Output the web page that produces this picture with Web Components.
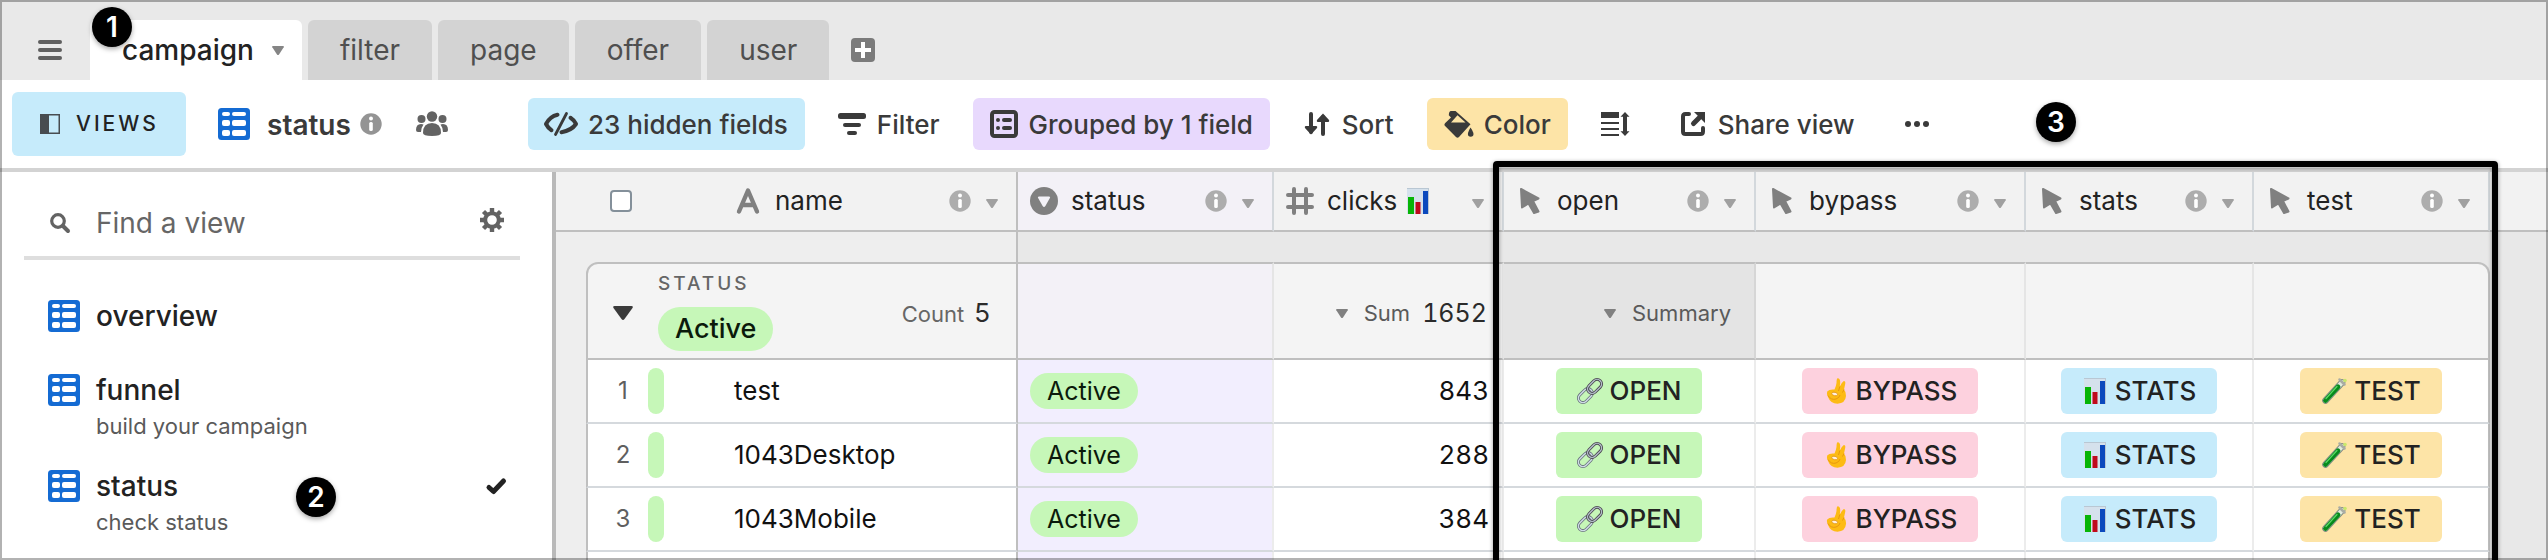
<!DOCTYPE html>
<html lang="en">
<head>
<meta charset="utf-8">
<meta name="viewport" content="width=device-width, initial-scale=1">
<title>campaign: status</title>
<style>
  html, body { margin: 0; height: 100%; }
  body {
    font-family: Inter, "Liberation Sans", sans-serif;
    font-size: 26px;
    color: #222;
    background: #fff;
    --green: #c6f7b8;
    --blue: #c6ebfb;
    --purple: #e8d9fd;
    --yellow: #fde4a7;
    --pink: #fdd1de;
    --line: #bfbfbf;
  }
</style>
</head>
<body>
<base-app></base-app>
<script>
const define = (name, html, setup) => {
  const tpl = document.createElement('template');
  tpl.innerHTML = html;
  customElements.define(name, class extends HTMLElement {
    constructor() {
      super();
      this.attachShadow({ mode: 'open' }).append(tpl.content.cloneNode(true));
    }
    connectedCallback() { if (setup) setup(this, this.shadowRoot); }
  });
};

/* name: [viewBox width, viewBox height, markup] */
const ICONS = {
  menu: [24, 20, '<g fill="currentColor"><rect width="24" height="4" rx="2"/><rect y="8" width="24" height="4" rx="2"/><rect y="16" width="24" height="4" rx="2"/></g>'],
  caret: [12, 9, '<path fill="currentColor" d="M1 0h10q1.4 0 .7 1.300L7 8.400Q6 9.600 5 8.400L.3 1.300Q-.4 0 1 0z"/>'],
  fold: [20, 14, '<path fill="currentColor" d="M1.500 0h17q2 0 1 2l-8 11q-1.500 2-3 0L.5 2Q-.5 0 1.500 0z"/>'],
  plus: [24, 24, '<rect width="24" height="24" rx="4" fill="currentColor"/><path d="M12 4v16M4 12h16" stroke="#fff" stroke-width="4"/>'],
  panel: [20, 20, '<rect x=".75" y=".75" width="18.500" height="18.500" fill="none" stroke="currentColor" stroke-width="1.500"/><path fill="currentColor" d="M0 0h9v20H0z"/>'],
  grid: [32, 32, '<rect width="32" height="32" rx="3.500" fill="#146bd3"/><g fill="#fff"><rect x="4" y="4" width="8" height="4" rx="2"/><rect x="14" y="4" width="14" height="4" rx="2"/><rect x="4" y="12" width="8" height="6" rx="2"/><rect x="14" y="12" width="14" height="6" rx="2"/><rect x="4" y="22" width="8" height="6" rx="2"/><rect x="14" y="22" width="14" height="6" rx="2"/></g>'],
  info: [22, 22, '<circle cx="11" cy="11" r="10.700" fill="currentColor"/><circle cx="11" cy="5.600" r="2" fill="#fff"/><rect x="9.200" y="9" width="3.600" height="9" rx="1.500" fill="#fff"/>'],
  people: [32, 26, '<g fill="currentColor"><circle cx="16" cy="5.500" r="5.200"/><circle cx="5.500" cy="8" r="4"/><circle cx="26.500" cy="8" r="4"/><path d="M7 22q0-10 9-10t9 10q0 3-9 3t-9-3z"/><path d="M0 19q0-6 5-6 1.500 0 2.500.6Q5 17 5 21H2q-2 0-2-2zM32 19q0-6-5-6-1.500 0-2.500.6Q27 17 27 21h3q2 0 2-2z"/></g>'],
  hidden: [32, 24, '<g transform="translate(-1)" fill="none" stroke="currentColor" stroke-linecap="round" stroke-linejoin="round"><path d="M13.500 2.800Q6 4.500 2 12q2 4 5.500 6.200" stroke-width="4"/><path d="M17.500 20.200Q27.500 18.500 32 12q-2-4-5.500-6.200" stroke-width="4"/><path d="M22.500 1.500l-11 21" stroke-width="2.800"/></g>'],
  filter: [28, 24, '<g fill="currentColor"><rect y="1" width="28" height="6" rx="2.500"/><rect x="5" y="11" width="18" height="4" rx="2"/><rect x="9" y="19" width="10" height="4" rx="2"/></g>'],
  group: [28, 28, '<rect x="2" y="2" width="24" height="24" rx="2.500" fill="none" stroke="currentColor" stroke-width="4"/><g fill="currentColor"><circle cx="8" cy="10" r="2"/><circle cx="8" cy="18" r="2"/><rect x="12" y="8" width="10" height="4" rx="2"/><rect x="12" y="16" width="10" height="4" rx="2"/></g>'],
  sort: [28, 24, '<g fill="none" stroke="currentColor" stroke-width="4" stroke-linecap="round"><path d="M8 2v18M20 5v17"/></g><path fill="currentColor" d="M2.500 14h11q1.500 1 .3 2.300L8 22.500 2.200 16.300Q1 15 2.500 14zM14.500 10h11q1.500-1 .3-2.300L20 1.500l-5.800 6.200Q13 9 14.500 10z"/>'],
  color: [29, 28, '<path fill="currentColor" d="M1 13.300L7 7.500 4.800 5.200Q5 1 7 1h4.500l15 13.300L15 27q-1.500 1.300-3 0L.6 15.500Q0 14.500 1 13.300zM7 12.500h14.500L13.500 5.200z" fill-rule="evenodd"/><path fill="currentColor" d="M26.500 17.500q3 4.500 3 6.500a2.800 2.800 0 0 1-5.600 0q0-2 2.600-6.500z"/>'],
  height: [28, 24, '<g fill="currentColor"><path d="M0 0h18v6H0zM0 10h18v2H0zM0 16h18v2H0zM0 22h18v2H0z"/><path d="M24 0l4.500 4.800h-2.500v14.400h2.500L24 24l-4.500-4.800H22V4.800h-2.500z"/></g>'],
  share: [28, 24, '<g fill="none" stroke="currentColor" stroke-width="4" stroke-linecap="round"><path d="M10 2H6.500Q4 2 4 4.500v15Q4 22 6.500 22h15q2.500 0 2.500-2.500V16"/><path d="M14.500 11.500L20 6" stroke-width="5"/></g><path fill="currentColor" d="M15 0h11v11z"/>'],
  dots: [24, 6, '<g fill="currentColor"><circle cx="3" cy="3" r="3"/><circle cx="12" cy="3" r="3"/><circle cx="21" cy="3" r="3"/></g>'],
  search: [20, 20, '<g fill="none" stroke="currentColor"><circle cx="8" cy="8" r="6.300" stroke-width="3.200"/><path d="M13 13l5 5" stroke-width="4" stroke-linecap="round"/></g>'],
  gear: [24, 24, '<g fill="none" stroke="currentColor"><circle cx="12" cy="12" r="6.800" stroke-width="4"/><path d="M12 0v4M12 20v4M0 12h4M20 12h4M3.500 3.500l3 3M17.500 17.500l3 3M3.500 20.500l3-3M17.500 6.500l3-3" stroke-width="4.400"/></g>'],
  check: [20, 16, '<path fill="none" stroke="currentColor" stroke-width="5" stroke-linecap="round" stroke-linejoin="round" d="M3 9.500l4.500 4L17.500 3"/>'],
  text: [28, 28, '<path fill="none" stroke="currentColor" stroke-width="4.400" stroke-linecap="round" stroke-linejoin="round" d="M5 24.500L14 3.500l9 21M8 18h12"/>'],
  select: [28, 28, '<circle cx="14" cy="14" r="14" fill="currentColor"/><path fill="#f3f1f7" d="M9 9.500h10q1.800 0 .9 1.600l-4.500 8q-1.400 2-2.800 0l-4.500-8Q7.200 9.500 9 9.500z"/>'],
  number: [28, 28, '<path fill="none" stroke="currentColor" stroke-width="4" stroke-linecap="round" d="M8 2v24M20 2v24M2 8h24M2 20h24"/>'],
  cursor: [28, 28, '<path fill="currentColor" stroke="currentColor" stroke-width="2" stroke-linejoin="round" d="M5 2l17.500 9.500L17 14l5.500 10.500-4.500 1.500-5.500-9.500L6 20.500z"/>'],
  link: [26, 26, '<g fill="none" transform="rotate(-45 13 13)"><rect x="-1.500" y="8.500" width="16" height="9" rx="4.500" stroke="#68717c" stroke-width="3"/><rect x="-1.500" y="8.500" width="16" height="9" rx="4.500" stroke="#cfdde6" stroke-width="1.400"/><rect x="11.500" y="8.500" width="16" height="9" rx="4.500" stroke="#4a4450" stroke-width="3"/><rect x="11.500" y="8.500" width="16" height="9" rx="4.500" stroke="#b5c2cc" stroke-width="1.300"/></g>'],
  chart: [26, 26, '<path fill="#d5e1ec" d="M2 0h22v26H2z"/><path fill="#b9c7d3" d="M2 0h22v1H2zM23 0h1v26h-1z"/><path fill="#07b507" d="M3 9h6v17H3z"/><path fill="#c00a1c" d="M10.500 14h5v12h-5z"/><path fill="#0b49bd" d="M18 3h5v23h-5z"/>'],
  ok: [26, 26, '<path fill="#fdbb14" d="M14.500.3q3 0 2.700 4.700l-.4 3.500q2-4.500 4-5.500 2 0 1.400 3L21 11.500q2.300 2.500 2 6.500-.6 7.300-8.500 7.700-7 0-9.500-6.700-1.700-3.500-.8-5.500 2-2.500 7.300-2 1.500-3 2-6.500Q13.500 1 14.500.3z"/><ellipse cx="11.700" cy="16" rx="3" ry="1.700" transform="rotate(14 11.700 16)" fill="#fff0e2" stroke="#e0930f" stroke-width=".8"/><path fill="none" stroke="#e8980f" stroke-width="1" d="M16.800 8.500L15.500 13M21 11.500l-1.500 3M5 17.500q3 5 8 3.500 3.500-1.200 4-4"/>'],
  tube: [26, 26, '<g stroke-linecap="round"><path d="M4.500 22.500L21 4.500" stroke="#848c84" stroke-width="6.600"/><path d="M4.500 22.500L21 4.500" stroke="#e2ebdc" stroke-width="4.600"/><path d="M4.500 22.500L17 8.800" stroke="#078a1c" stroke-width="4.800"/><path d="M5 20.500L16 8.500" stroke="#5bd866" stroke-width="1.200"/></g><path d="M18.500 1.500l5 5" stroke="#a9aca4" stroke-width="2.500" stroke-linecap="round"/><circle cx="24" cy="2.500" r="1.800" fill="#c9e86b"/>']
};
define('ui-icon', `<style>
  :host { display: inline-flex; flex: none; }
  svg { display: block; overflow: visible; }
</style>`, (el, root) => {
  const [w, h, body] = ICONS[el.getAttribute('name')];
  root.querySelector('svg')?.remove();
  root.append(document.createRange().createContextualFragment(
    `<svg width="${w}" height="${h}" viewBox="0 0 ${w} ${h}" aria-hidden="true">${body}</svg>`));
});

define('table-tab', `<style>
  :host { display: block; }
  button {
    display: flex; align-items: center; gap: 18px; height: 60px; padding: 0 32px;
    border: 0; border-radius: 6px 6px 0 0; background: #d3d3d3; color: #4f4f4f;
    font: 400 28px/32px Inter, sans-serif;
  }
  :host([active]) button { padding-right: 18px; background: #fff; color: #222; font-weight: 500; }
  ui-icon { color: #858585; }
  :host(:not([active])) ui-icon { display: none; }
</style><button type="button" role="tab"><slot></slot><ui-icon name="caret"></ui-icon></button>`);

define('table-tabs', `<style>
  :host { display: flex; align-items: flex-end; gap: 6px; height: 80px; background: #e9e9e9; color: #5f5f5f; }
  button { display: flex; align-items: center; justify-content: center; height: 60px; padding: 0; border: 0; background: none; color: inherit; }
  .menu { width: 84px; padding-left: 16px; }
  .add { padding: 0 16px; color: #7b7b7b; }
</style>
<button class="menu" type="button" aria-label="Menu"><ui-icon name="menu"></ui-icon></button>
<slot></slot>
<button class="add" type="button" aria-label="Add table"><ui-icon name="plus"></ui-icon></button>`);

define('tool-button', `<style>
  :host { display: block; flex: none; }
  button {
    display: flex; align-items: center; gap: 11px; height: 52px; padding: 0 17px;
    border: 0; border-radius: 6px; background: var(--tint, none); color: #3a3a3a;
    font: 500 26px/32px Inter, sans-serif; white-space: nowrap;
  }
  .label { padding-top: 2px; }
  :host([label]) .label { display: none; }
</style><button type="button"><slot name="icon"></slot><span class="label"><slot></slot></span></button>`, (el, root) => {
  if (el.hasAttribute('label')) root.querySelector('button').setAttribute('aria-label', el.getAttribute('label'));
});

define('view-toolbar', `<style>
  :host { display: flex; align-items: center; gap: 16px; height: 88px; padding-left: 12px; border-bottom: 4px solid #d3d3d3; background: #fff; }
  .views {
    display: flex; flex: none; align-items: center; gap: 16px; height: 64px; width: 174px; padding: 0 0 0 28px;
    border: 0; border-radius: 6px; background: var(--blue); color: #484c50;
    font: 500 21px/32px Inter, sans-serif; letter-spacing: 3px;
  }
  .views span { color: #222; }
  .title { display: flex; flex: 0 0 294px; align-items: center; padding-left: 16px; color: #636363; }
  h1 { margin: 0 9px 0 17px; padding-top: 2px; font: 600 28px/32px Inter, sans-serif; color: #3a3a3a; }
  .title ui-icon[name=info] { color: #949494; }
  .title ui-icon[name=people] { margin-left: 34px; }
</style>
<button class="views" type="button"><ui-icon name="panel"></ui-icon><span>VIEWS</span></button>
<div class="title"><ui-icon name="grid"></ui-icon><h1>status</h1><ui-icon name="info"></ui-icon><ui-icon name="people"></ui-icon></div>
<tool-button style="--tint:var(--blue)"><ui-icon slot="icon" name="hidden"></ui-icon>23 hidden fields</tool-button>
<tool-button><ui-icon slot="icon" name="filter"></ui-icon>Filter</tool-button>
<tool-button style="--tint:var(--purple)"><ui-icon slot="icon" name="group"></ui-icon>Grouped by 1 field</tool-button>
<tool-button><ui-icon slot="icon" name="sort"></ui-icon>Sort</tool-button>
<tool-button style="--tint:var(--yellow)"><ui-icon slot="icon" name="color"></ui-icon>Color</tool-button>
<tool-button label="Row height"><ui-icon slot="icon" name="height"></ui-icon></tool-button>
<tool-button><ui-icon slot="icon" name="share"></ui-icon>Share view</tool-button>
<tool-button label="More options"><ui-icon slot="icon" name="dots"></ui-icon></tool-button>`);

define('view-item', `<style>
  :host { display: block; }
  a { display: grid; grid-template-columns: 32px 1fr auto; column-gap: 16px; align-items: center; padding: 0 14px 0 24px; color: #222; text-decoration: none; }
  .name { font: 500 28px/32px Inter, sans-serif; }
  .note { display: block; grid-column: 2; margin-top: 6px; font: 400 22px/28px Inter, sans-serif; color: #5a5a5a; }
  .check { display: none; }
  :host([current]) .check { display: flex; }
  :host(:not([noted])) .note { display: none; }
</style>
<a href="#"><ui-icon name="grid"></ui-icon><span class="name"><slot></slot></span><ui-icon class="check" name="check"></ui-icon><slot class="note" name="note"></slot></a>`);

define('view-sidebar', `<style>
  :host { display: block; flex: none; box-sizing: border-box; width: 556px; padding: 0 32px 0 24px; border-right: 4px solid #b9b9b9; background: #fff; }
  .find { display: flex; align-items: center; height: 84px; padding: 0 16px 0 26px; border-bottom: 4px solid #dedede; color: #636363; }
  label { display: flex; margin-top: 18px; }
  input { flex: 1; min-width: 0; margin: 18px 0 0 26px; padding: 0; border: 0; outline: 0; background: none; font: 400 28px/32px Inter, sans-serif; color: #222; }
  input::placeholder { color: #666; opacity: 1; }
  button { display: flex; margin-top: 12px; padding: 0; border: 0; background: none; color: inherit; }
  nav { display: grid; gap: 42px; padding-top: 40px; }
  view-item[noted] + view-item { margin-top: -12px; }
</style>
<div class="find"><label for="find" aria-label="Find a view"><ui-icon name="search"></ui-icon></label><input id="find" type="text" placeholder="Find a view" aria-label="Find a view"><button type="button" aria-label="View settings"><ui-icon name="gear"></ui-icon></button></div>
<nav>
  <view-item>overview</view-item>
  <view-item noted>funnel<span slot="note">build your campaign</span></view-item>
  <view-item noted current>status<span slot="note">check status</span></view-item>
</nav>`);

define('field-head', `<style>
  :host { display: flex; align-items: center; height: 56px; padding: 0 18px 0 12px; font: 400 26px/32px Inter, sans-serif; color: #222; }
  .type { display: flex; margin-right: 13px; color: #808080; }
  .name { display: flex; flex: 1; align-items: center; gap: 8px; }
  .info { margin-right: 15px; color: #adadad; }
  .caret { margin-top: 4px; color: #a0a0a0; }
  :host([plain]) .info { display: none; }
</style><slot name="type" class="type"></slot><span class="name"><slot></slot></span><ui-icon class="info" name="info"></ui-icon><ui-icon class="caret" name="caret"></ui-icon>`);

define('status-pill', `<style>
  :host { display: block; width: max-content; padding: 0 17px; border-radius: 22px; background: var(--green); color: #0b1a0b; font-size: 25px; line-height: 36px; }
  :host([large]) { font-size: 27px; line-height: 44px; font-weight: 500; }
</style><slot></slot>`);

define('action-chip', `<style>
  :host { display: flex; justify-content: center; }
  button { display: flex; align-items: center; gap: 7px; height: 46px; padding: 0 21px; border: 0; border-radius: 6px; background: var(--tint); color: #222; font: 500 26px/32px Inter, sans-serif; }
</style><button type="button"><slot name="icon"></slot><slot></slot></button>`);

define('step-badge', `<style>
  :host {
    position: absolute; z-index: 3; width: 40px; height: 40px; border-radius: 50%;
    background: #000; color: #fff; font: 600 28px/40px Inter, sans-serif; text-align: center;
    box-shadow: 0 2px 5px rgba(0,0,0,.35);
  }
</style><slot></slot>`);

const head = (type, label, plain = '') =>
  `<field-head ${plain}><ui-icon slot="type" name="${type}"></ui-icon>${label}</field-head>`;

const chip = (icon, label, tint) =>
  `<td><action-chip style="--tint:var(--${tint})"><ui-icon slot="icon" name="${icon}"></ui-icon>${label}</action-chip></td>`;

const row = (n, name, clicks) => `<tr class="record">
  <td class="gutter"></td>
  <td class="num"><div><span>${n}</span><i></i></div></td>
  <td class="name">${name}</td>
  <td class="status"><status-pill>Active</status-pill></td>
  <td class="clicks">${clicks}</td>
  ${chip('link', 'OPEN', 'green')}${chip('ok', 'BYPASS', 'pink')}${chip('chart', 'STATS', 'blue')}${chip('tube', 'TEST', 'yellow')}
  <td class="rest"></td></tr>`;

define('record-grid', `<style>
  :host { display: block; position: relative; flex: 1; min-width: 0; background: #e8e8e8; }
  table {
    width: 100%; table-layout: fixed; border-collapse: separate; border-spacing: 0;
    background: linear-gradient(90deg, #eee 460px, #e8e8e8 460px);
  }
  th, td { box-sizing: border-box; padding: 0; text-align: left; font-weight: 400; }
  thead th { height: 60px; background: #f2f2f2; border-right: 2px solid #d3d8dc; border-bottom: 2px solid var(--line); }
  thead th.all { border-right: 0; padding-left: 54px; }
  thead th.frozen, .gap .frozen, .group .frozen, .record .name { border-right: 2px solid var(--line); }
  thead th.status { background: #f3f1f7; }
  thead th:last-child { border-right: 0; }
  input { appearance: none; display: block; box-sizing: border-box; width: 22px; height: 22px; margin: 0; border: 2px solid #84909a; border-radius: 4px; background: #fff; }
  .gap td { height: 30px; }
  .group td { height: 98px; border-top: 2px solid var(--line); border-bottom: 2px solid var(--line); border-right: 2px solid #e5e5e5; background: #f4f4f4; color: #5f5f5f; font-size: 22px; line-height: 28px; }
  .group td.gutter, .group td.rest { border: 0; background: none; }
  .group td.lead { border-left: 2px solid var(--line); border-top-left-radius: 12px; }
  .group td.end { border-right: 2px solid var(--line); border-top-right-radius: 12px; }
  .group td.status { background: #f3f1f7; }
  .group td.hover { background: #e4e4e4; border-right-color: #d6d6d6; }
  .lead > div { display: grid; grid-template-columns: 20px 1fr auto; column-gap: 25px; align-items: center; padding: 0 26px 0 25px; color: #3a3a3a; }
  .lead ui-icon { margin-top: 4px; }
  .field { font-size: 19px; line-height: 24px; font-weight: 500; letter-spacing: 3px; color: #666; margin-bottom: 11px; }
  .count, .sum { display: flex; align-items: baseline; gap: 10px; margin-top: 4px; color: #666; }
  .count b, .sum b { font-size: 26px; font-weight: 400; color: #2b2b2b; }
  .sum { justify-content: flex-end; align-items: center; gap: 12px; padding-right: 15px; color: #5a5a5a; }
  .sum ui-icon { color: #808080; margin-right: 4px; }
  .sum b { font-size: 25px; font-variant-numeric: tabular-nums; }
  .hover .sum { padding-right: 23px; }
  .record td { height: 64px; border-right: 2px solid #ececec; border-bottom: 2px solid #d5d9dd; background: #fff; color: #111; font-size: 26px; line-height: 32px; }
  .record td.gutter, .record td.rest { border: 0; background: none; }
  .record td.num { border-left: 2px solid var(--line); border-right: 0; }
  .num div { display: flex; align-items: center; }
  .num span { width: 60px; padding-left: 10px; box-sizing: border-box; text-align: center; font-size: 24px; color: #5f5f5f; }
  .num i { width: 16px; height: 46px; border-radius: 8px; background: var(--green); }
  .record td.name { padding-left: 12px; }
  .record td.status { padding-left: 12px; background: #f2eefe; }
  .record td.clicks { padding-right: 13px; text-align: right; font-variant-numeric: tabular-nums; }
  .record td:nth-last-child(2) { border-right: 2px solid var(--line); }
  .frame { position: absolute; z-index: 2; top: -11px; bottom: -10px; left: 937px; width: 993px; border: 6px solid #000; border-radius: 4px; pointer-events: none; box-shadow: 0 1px 4px rgba(0,0,0,.4), inset 0 1px 4px rgba(0,0,0,.4); }
</style>
<table>
  <colgroup><col style="width:30px"><col style="width:136px"><col style="width:296px"><col style="width:256px"><col style="width:230px"><col style="width:252px"><col style="width:270px"><col style="width:228px"><col style="width:236px"><col></colgroup>
  <thead><tr>
    <th class="all" colspan="2"><input type="checkbox" aria-label="Select all records"></th>
    <th class="frozen">${head('text', 'name')}</th>
    <th class="status">${head('select', 'status')}</th>
    <th>${head('number', 'clicks <ui-icon name="chart"></ui-icon>', 'plain')}</th>
    <th>${head('cursor', 'open')}</th>
    <th>${head('cursor', 'bypass')}</th>
    <th>${head('cursor', 'stats')}</th>
    <th>${head('cursor', 'test')}</th>
    <th></th>
  </tr></thead>
  <tbody>
    <tr class="gap"><td class="frozen" colspan="3"></td><td colspan="7"></td></tr>
    <tr class="group">
      <td class="gutter"></td>
      <td class="lead frozen" colspan="2"><div><ui-icon name="fold"></ui-icon><span><div class="field">STATUS</div><status-pill large>Active</status-pill></span><span class="count">Count <b>5</b></span></div></td>
      <td class="status"></td>
      <td><div class="sum"><ui-icon name="caret"></ui-icon>Sum <b>1652</b></div></td>
      <td class="hover"><div class="sum"><ui-icon name="caret"></ui-icon>Summary</div></td>
      <td></td><td></td><td class="end"></td><td class="rest"></td>
    </tr>
    ${row(1, 'test', 843)}${row(2, '1043Desktop', 288)}${row(3, '1043Mobile', 384)}
    <tr class="record"><td class="gutter"></td><td class="num"></td><td class="name"></td><td class="status"></td><td></td><td></td><td></td><td></td><td></td><td class="rest"></td></tr>
  </tbody>
</table>
<div class="frame"></div>`);

define('base-app', `<style>
  :host { display: flex; flex-direction: column; position: relative; height: 100vh; overflow: hidden; }
  :host::after { content: ""; position: absolute; z-index: 4; inset: 0; border: 2px solid rgba(0,0,0,.3); pointer-events: none; }
  table-tabs, view-toolbar { flex: none; }
  main { display: flex; flex: 1; min-height: 0; }
</style>
<table-tabs><table-tab active>campaign</table-tab><table-tab>filter</table-tab><table-tab>page</table-tab><table-tab>offer</table-tab><table-tab>user</table-tab></table-tabs>
<view-toolbar></view-toolbar>
<main><view-sidebar></view-sidebar><record-grid></record-grid></main>
<step-badge style="left:92px;top:7px">1</step-badge>
<step-badge style="left:296px;top:477px">2</step-badge>
<step-badge style="left:2036px;top:102px">3</step-badge>`);
</script>
</body>
</html>
